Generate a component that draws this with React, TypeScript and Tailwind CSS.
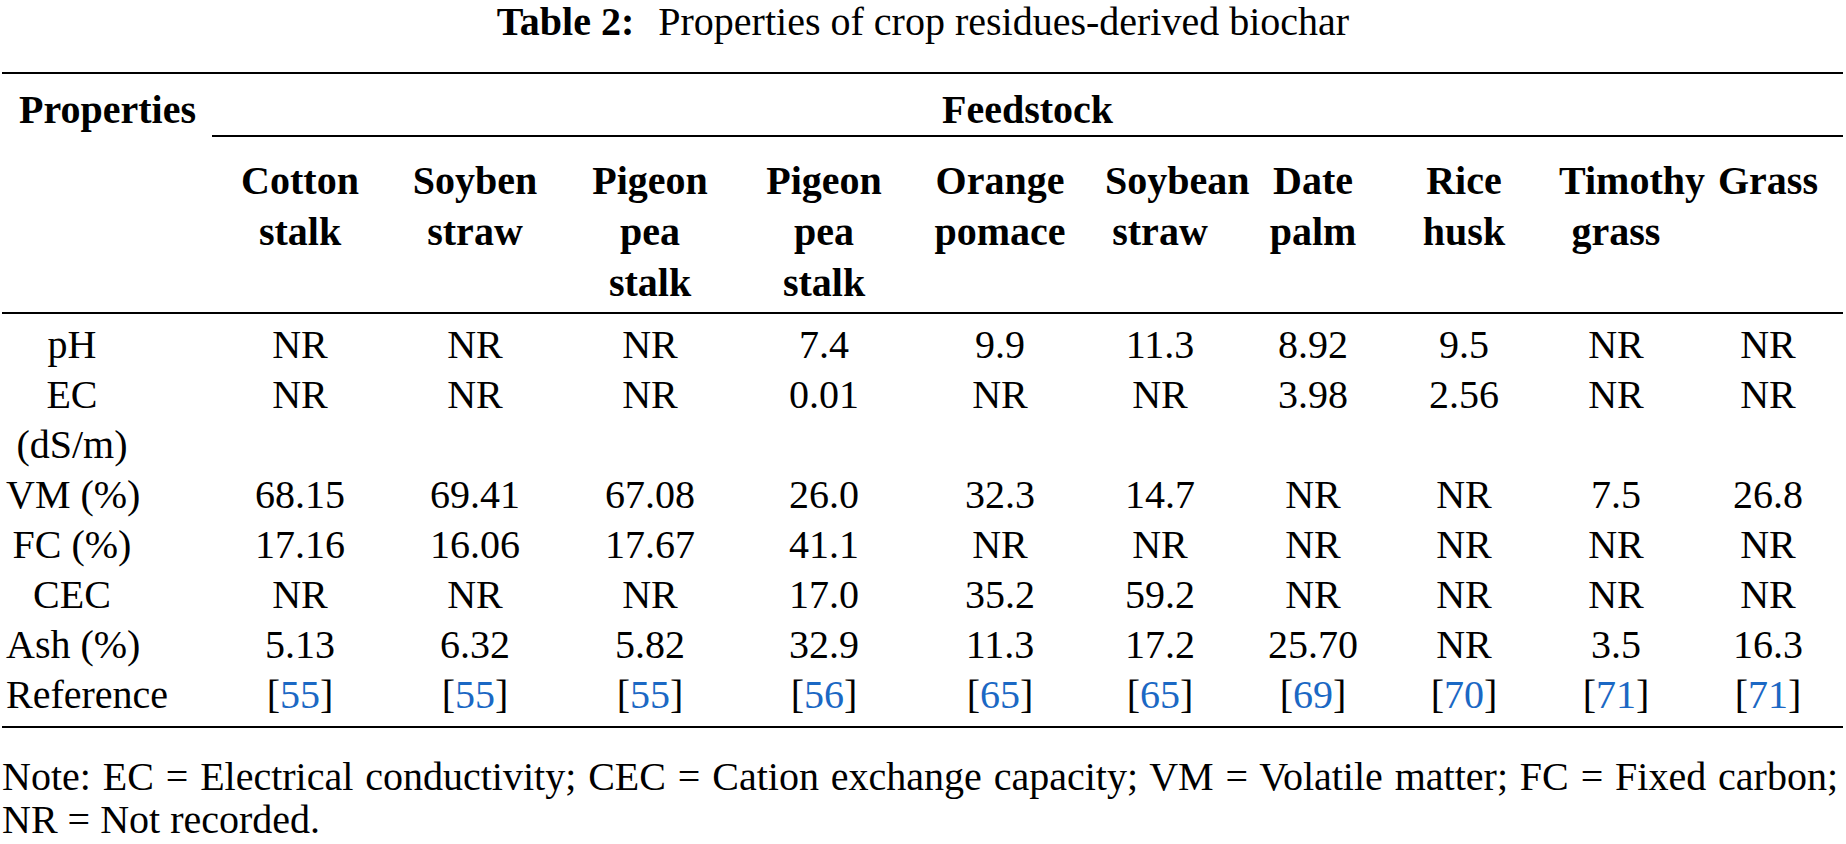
import React from 'react';

const GRID =
  'grid grid-cols-[210px_176px_174px_176px_172px_180px_140px_166px_136px_168px_136px]';

const headers: { lines: string[]; box: string }[] = [
  { lines: ['Cotton', 'stalk'], box: 'w-full' },
  { lines: ['Soyben', 'straw'], box: 'w-full' },
  { lines: ['Pigeon', 'pea', 'stalk'], box: 'w-full' },
  { lines: ['Pigeon', 'pea', 'stalk'], box: 'w-full' },
  { lines: ['Orange', 'pomace'], box: 'w-full' },
  { lines: ['Soybean', 'straw'], box: 'w-[110px]' },
  { lines: ['Date', 'palm'], box: 'w-full' },
  { lines: ['Rice', 'husk'], box: 'w-full' },
  { lines: ['Timothy', 'grass'], box: 'w-[114px]' },
  { lines: ['Grass'], box: 'w-full' },
];

const rows: { label: string[]; values: string[] }[] = [
  { label: ['pH'], values: ['NR', 'NR', 'NR', '7.4', '9.9', '11.3', '8.92', '9.5', 'NR', 'NR'] },
  { label: ['EC', '(dS/m)'], values: ['NR', 'NR', 'NR', '0.01', 'NR', 'NR', '3.98', '2.56', 'NR', 'NR'] },
  { label: ['VM (%)'], values: ['68.15', '69.41', '67.08', '26.0', '32.3', '14.7', 'NR', 'NR', '7.5', '26.8'] },
  { label: ['FC (%)'], values: ['17.16', '16.06', '17.67', '41.1', 'NR', 'NR', 'NR', 'NR', 'NR', 'NR'] },
  { label: ['CEC'], values: ['NR', 'NR', 'NR', '17.0', '35.2', '59.2', 'NR', 'NR', 'NR', 'NR'] },
  { label: ['Ash (%)'], values: ['5.13', '6.32', '5.82', '32.9', '11.3', '17.2', '25.70', 'NR', '3.5', '16.3'] },
];

const refs = ['55', '55', '55', '56', '65', '65', '69', '70', '71', '71'];

const LabelCell: React.FC<{ lines: string[] }> = ({ lines }) => (
  <div className="ml-[4px] w-[132px] text-center">
    {lines.map((l) => (
      <div key={l} className="whitespace-nowrap">
        {l}
      </div>
    ))}
  </div>
);

export default function App() {
  return (
    <div className="w-[1846px] h-[844px] overflow-hidden bg-white text-black font-['Liberation_Serif',serif] text-[40px]">
      {/* caption */}
      <div className="pt-[2px] leading-[40px] text-center whitespace-nowrap">
        <span className="font-bold">Table 2:</span>
        <span className="pl-[24px]">Properties of crop residues-derived biochar</span>
      </div>

      {/* table */}
      <div className="mt-[30px] ml-[2px] mr-[3px] border-t-2 border-black">
        {/* top header */}
        <div className="grid grid-cols-[210px_1fr] leading-[50px]">
          <div className="pt-[11px] pl-[17px] font-bold whitespace-nowrap">Properties</div>
          <div className="pt-[11px] text-center font-bold border-b-2 border-black">Feedstock</div>
        </div>

        {/* feedstock names */}
        <div className={`${GRID} pt-[18px] pb-[4px] leading-[51px] font-bold border-b-2 border-black`}>
          <div />
          {headers.map((h, i) => (
            <div key={i} className={`${h.box} mx-auto text-center`}>
              {h.lines.map((l, j) => (
                <div key={j} className="whitespace-nowrap">
                  {l}
                </div>
              ))}
            </div>
          ))}
        </div>

        {/* body */}
        <div className="pt-[6px] pb-[6px] leading-[50px] border-b-2 border-black">
          {rows.map((r) => (
            <div key={r.label.join(' ')} className={GRID}>
              <LabelCell lines={r.label} />
              {r.values.map((v, i) => (
                <div key={i} className="text-center whitespace-nowrap">
                  {v}
                </div>
              ))}
            </div>
          ))}
          <div className={GRID}>
            <LabelCell lines={['Reference']} />
            {refs.map((ref, i) => (
              <div key={i} className="text-center whitespace-nowrap">
                [<span className="text-[#1b68c4]">{ref}</span>]
              </div>
            ))}
          </div>
        </div>
      </div>

      {/* note */}
      <div className="mt-[26px] ml-[2px] w-[1836px]">
        <div className="leading-[46px] whitespace-nowrap [text-align-last:justify]">
          Note: EC = Electrical conductivity; CEC = Cation exchange capacity; VM = Volatile matter; FC = Fixed carbon;
        </div>
        <div className="leading-[40px] whitespace-nowrap">NR = Not recorded.</div>
      </div>
    </div>
  );
}
